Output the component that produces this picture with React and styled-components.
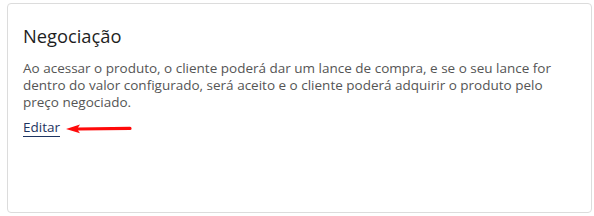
import React from "react";
import styled, { createGlobalStyle } from "styled-components";

const GlobalStyle = createGlobalStyle`
  html, body {
    margin: 0;
    padding: 0;
    background: #ffffff;
  }
  body {
    font-family: "Open Sans", "Liberation Sans", sans-serif;
  }
`;

const Page = styled.div`
  width: 594px;
  height: 216px;
  padding: 3px 2px 3px 7px;
  box-sizing: border-box;
`;

const Card = styled.div`
  height: 100%;
  box-sizing: border-box;
  border: 1px solid #dcdcdc;
  border-radius: 4px;
  padding: 20px 16px 16px 15px;
  background: #fff;
`;

const Title = styled.h2`
  margin: 0 0 12px;
  font-size: 18.3px;
  font-weight: 400;
  line-height: 24px;
  color: #1e1e1e;
`;

const Text = styled.p`
  margin: 0 0 9px;
  font-size: 13.5px;
  line-height: 16.8px;
  color: #555;
`;

const Row = styled.div`
  display: flex;
  align-items: center;
  gap: 5px;
`;

const EditLink = styled.a`
  font-size: 13.5px;
  line-height: 17px;
  color: #1d3461;
  text-decoration: none;
  border-bottom: 1px solid #1d3461;
  cursor: pointer;
`;

const Arrow = () => (
  <svg width="68" height="11" viewBox="0 0 68 11">
    <path
      d="M1 6 L15 1.5 L13 4.6 L65 3.8 A1.6 1.6 0 0 1 65 7 L13 7.4 L15 10.3 Z"
      fill="#ff0a0a"
    />
  </svg>
);

export default function App() {
  return (
    <>
      <GlobalStyle />
      <Page>
        <Card>
          <Title>Negociação</Title>
          <Text>
            Ao acessar o produto, o cliente poderá dar um lance de compra, e se o seu lance for
            dentro do valor configurado, será aceito e o cliente poderá adquirir o produto pelo
            preço negociado.
          </Text>
          <Row>
            <EditLink>Editar</EditLink>
            <Arrow />
          </Row>
        </Card>
      </Page>
    </>
  );
}
